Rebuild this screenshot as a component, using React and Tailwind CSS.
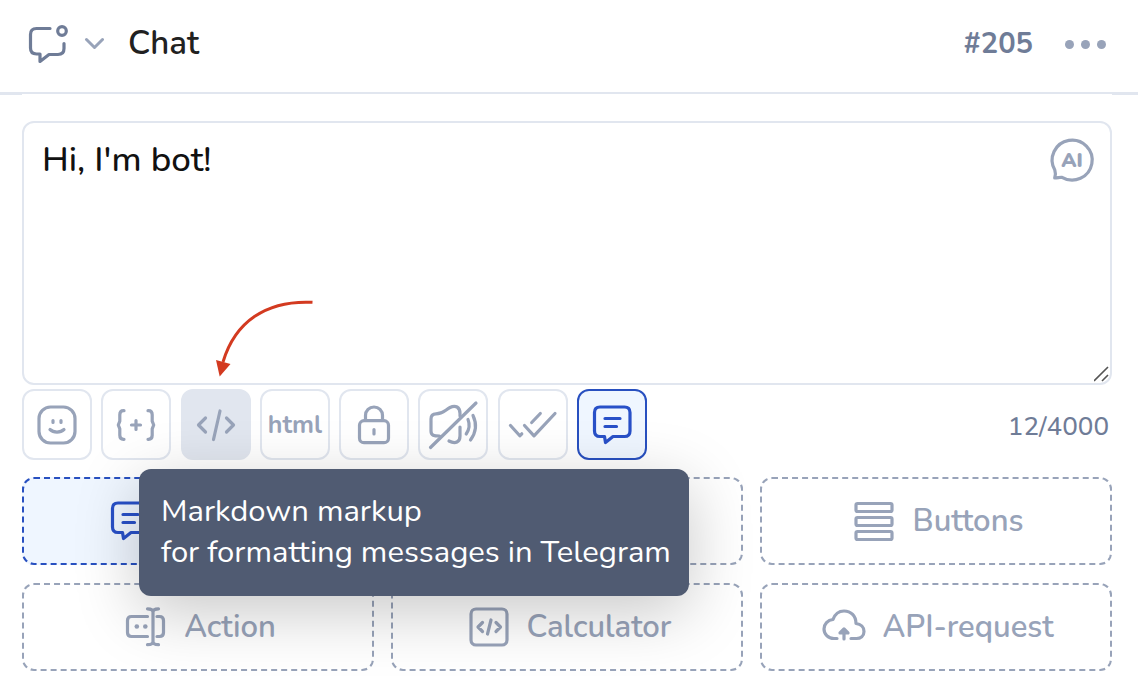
import React, { useState } from 'react';
import clsx from 'clsx';

function Icon({ children }) {
  return (
    <svg
      viewBox="0 0 48 48"
      className="w-12 h-12 shrink-0 overflow-visible"
      fill="none"
      stroke="currentColor"
      strokeWidth="3.2"
      strokeLinecap="round"
      strokeLinejoin="round"
      aria-hidden="true"
    >
      {children}
    </svg>
  );
}

const ChatIcon = () => (
  <Icon>
    <path d="M26 8.500H12.500c-4 0-6 2-6 6v13.500c0 4 2 6 6 6h3.500v7.500L25 34.500h9c4 0 6-2 6-6v-5" />
    <circle cx="38" cy="11" r="4.300" />
  </Icon>
);

const MessageIcon = () => (
  <Icon>
    <path d="M12 6h24.500c3.500 0 5.500 2 5.500 5.500V30c0 3.500-2 5.500-5.500 5.500H25L17.500 41.500 16.500 35.500H12c-3.500 0-5.500-2-5.500-5.500V11.500C6.500 8 8.500 6 12 6z" />
    <path d="M17 17.500h15M17 25.500h11.500" />
  </Icon>
);

const SmileIcon = () => (
  <Icon>
    <rect x="6" y="6" width="36" height="36" rx="11.500" />
    <path d="M20 19.500v2M28 19.500v2M17 28.500c3.500 3.400 10.500 3.400 14 0" />
  </Icon>
);

const VariableIcon = () => (
  <Icon>
    <path d="M12 9.700h-.5c-2.600 0-3.700 1.300-3.700 4v6.500L6.300 24l1.500 3.800v6.500c0 2.700 1.100 4 3.700 4h.5" />
    <path d="M36 9.700h.5c2.600 0 3.700 1.300 3.700 4v6.500l1.500 3.800-1.500 3.800v6.500c0 2.700-1.100 4-3.700 4H36" />
    <path d="M24 19.500v9M19.500 24h9" />
  </Icon>
);

const CodeIcon = () => (
  <Icon>
    <path d="M13.500 17L6.500 24l7 7M34.500 17l7 7-7 7M28 10l-6.500 28.500" />
  </Icon>
);

const LockIcon = () => (
  <Icon>
    <rect x="9.500" y="19.700" width="29" height="22" rx="4.500" />
    <path d="M15.500 19.500v-5a8.500 8.500 0 0 1 17 0v5M24 28.500V33" />
  </Icon>
);

const MuteIcon = () => (
  <Icon>
    <path d="M10.500 35C5 35 2 34.500 2 30V18c0-4 2-5.200 5-5.200 7 0 8.500-3.300 14-6.300 5.500-2.800 10-.5 10 6V15" />
    <path d="M31 26v9c0 6-4.500 8.500-11 5" />
    <path d="M39 18.500c1.800 4.500 1.300 10-1.800 14.500M44 14.500c3.800 8 3 17-2.500 24.500" />
    <path d="M47 2L1.500 46.500" />
  </Icon>
);

const ChecksIcon = () => (
  <Icon>
    <path d="M1.500 24.500l9.300 10.300 2-2M15.500 24.500L25 34.800 46 12.500M22.700 21.500l8.600-9" />
  </Icon>
);

const ActionIcon = () => (
  <Icon>
    <path d="M25.500 13.500H9.500c-2.700 0-4 1.300-4 4v12c0 2.700 1.300 4 4 4h16M35 13.500h2.500c2.700 0 4 1.300 4 4v12c0 2.700-1.300 4-4 4H35" />
    <path d="M25.500 5.800c3.500 0 5.500.700 5.500 3.200 0-2.500 2-3.200 5.500-3.200M31 9v29.500M25.500 41.700c3.500 0 5.500-.7 5.500-3.200 0 2.500 2 3.200 5.500 3.200" />
    <circle cx="14.800" cy="23.500" r="2.300" fill="currentColor" stroke="none" />
    <circle cx="23.300" cy="23.500" r="2.300" fill="currentColor" stroke="none" />
  </Icon>
);

const CalculatorIcon = () => (
  <Icon>
    <rect x="6" y="6" width="36" height="36" rx="5" />
    <path d="M17.500 19.500L13 24l4.500 4.500M31 19.500l4.500 4.500-4.500 4.500M26 17l-3.500 14" />
  </Icon>
);

const ButtonsIcon = () => (
  <Icon>
    <rect x="6" y="6.500" width="36" height="8" rx="1.500" />
    <rect x="6" y="20.500" width="36" height="8" rx="1.500" />
    <rect x="6" y="34.500" width="36" height="8" rx="1.500" />
  </Icon>
);

const CloudIcon = () => (
  <Icon>
    <path d="M17 35.500h-3C8 35.500 4 31 4 26c0-4.800 3.700-9 9-9.500C15 11 19 8 24 8c7 0 12 5 12 12.500 5 .500 8 4 8 8 0 4.500-3.500 7-7.500 7H31" />
    <path d="M24 36V26M20 30l4-4 4 4z" fill="currentColor" />
  </Icon>
);

const tools = [
  { id: 'emoji', label: 'Emoji', icon: SmileIcon },
  { id: 'variable', label: 'Insert variable', icon: VariableIcon },
  { id: 'markdown', label: 'Markdown', icon: CodeIcon, hovered: true },
  { id: 'html', label: 'html' },
  { id: 'lock', label: 'Protect content', icon: LockIcon },
  { id: 'mute', label: 'Silent message', icon: MuteIcon },
  { id: 'read', label: 'Mark as read', icon: ChecksIcon },
  { id: 'message', label: 'Message', icon: MessageIcon, active: true },
];

// covered blocks sit under the open tooltip and keep only their accessible name
const blocks = [
  { id: 'message', label: 'Message', icon: MessageIcon, active: true, covered: true },
  { id: 'media', label: 'Media', covered: true },
  { id: 'buttons', label: 'Buttons', icon: ButtonsIcon },
  { id: 'action', label: 'Action', icon: ActionIcon },
  { id: 'calculator', label: 'Calculator', icon: CalculatorIcon },
  { id: 'api', label: 'API-request', icon: CloudIcon },
];

function ToolButton({ tool }) {
  const ToolIcon = tool.icon;
  return (
    <button
      type="button"
      aria-label={tool.label}
      className={clsx(
        'w-[70px] h-[71px] flex items-center justify-center rounded-xl border-2',
        tool.active && 'border-[#2850c0] bg-[#eff6ff] text-[#2850c8]',
        tool.hovered && 'border-[#e1e6ef] bg-[#e1e6ef] text-[#98a3b9]',
        !tool.active && !tool.hovered && 'border-[#e1e6ef] bg-white text-[#98a3b9]'
      )}
    >
      {ToolIcon ? <ToolIcon /> : <span className="text-[25px] leading-8 font-bold">{tool.label}</span>}
    </button>
  );
}

function BlockButton({ block }) {
  const BlockIcon = block.icon;
  return (
    <button
      type="button"
      aria-label={block.label}
      className={clsx(
        'h-[88px] flex items-center justify-center gap-3.5 pl-0.5 rounded-xl border-2 border-dashed text-[31px] leading-10 font-semibold',
        block.active
          ? 'border-[#2850c0] bg-[#eff6ff] text-[#2850c8]'
          : 'border-[#98a3b9] bg-white text-[#98a3b9]'
      )}
    >
      {BlockIcon && <BlockIcon />}
      {block.covered ? <span className="w-[124px]" /> : block.label}
    </button>
  );
}

export default function App() {
  const [message, setMessage] = useState("Hi, I'm bot!");

  return (
    <div className="bg-white font-[Nunito,Lato,sans-serif] overflow-hidden pb-[17px]">
      <header className="h-[94px] flex items-center justify-between pl-6 pr-8 pb-1 border-b-2 border-[#e1e6ef]">
        <div className="flex items-center">
          <button type="button" aria-label="Block type" className="flex items-center gap-3 text-[#6f7c97]">
            <ChatIcon />
            <svg viewBox="0 0 20 20" className="w-5 h-5 text-[#98a3b9]" fill="none" stroke="currentColor" strokeWidth="3" strokeLinecap="round" strokeLinejoin="round" aria-hidden="true">
              <path d="M2.500 5.500l8 8 8-8" />
            </svg>
          </button>
          <h1 className="ml-6 text-[33px] leading-10 font-semibold text-[#212121]">Chat</h1>
        </div>
        <div className="flex items-center gap-8">
          <span className="text-[29px] leading-10 font-bold text-[#6f7c97]">#205</span>
          <button type="button" aria-label="More" className="w-[41px] flex justify-between text-[#98a3b9]">
            <span className="w-[9px] h-[9px] rounded-full bg-current" />
            <span className="w-[9px] h-[9px] rounded-full bg-current" />
            <span className="w-[9px] h-[9px] rounded-full bg-current" />
          </button>
        </div>
      </header>
      <div className="flex justify-between h-px">
        <span className="w-[22px] bg-[#e1e6ef]" />
        <span className="w-[26px] bg-[#e1e6ef]" />
      </div>

      <main className="pl-[22px] pr-[26px] pt-[26px]">
        <div className="relative">
          <textarea
            aria-label="Message text"
            value={message}
            onChange={(e) => setMessage(e.target.value)}
            className="block w-full h-[264px] resize-none rounded-xl border-2 border-[#e1e6ef] pl-[18px] pr-20 py-4 text-[35px] leading-[42px] font-medium text-[#111] outline-none"
          />
          <button type="button" aria-label="AI assistant" className="absolute right-4 top-[15px] text-[#98a3b9]">
            <Icon>
              <path d="M6.800 34A20 20 0 1 1 14 41.300c-2-.3-4.500.700-7.300.700.9-2.500 1.100-5 .1-8z" />
              <text x="24" y="31" textAnchor="middle" fontSize="20" fontWeight="900" fill="currentColor" stroke="none">AI</text>
            </Icon>
          </button>
          <svg viewBox="0 0 16 16" className="absolute right-0.5 bottom-[3px] w-4 h-4 pointer-events-none" stroke="#555" strokeWidth="1.600" aria-hidden="true">
            <path d="M0 15L14 1M8 15l6-6" />
          </svg>
          <svg viewBox="0 0 100 80" className="absolute left-[193px] top-[178px] w-[100px] h-20 pointer-events-none" fill="none" aria-hidden="true">
            <path d="M97.500 3.300C51 1 20 23 8 63" stroke="#d33a20" strokeWidth="3" />
            <path d="M1 61l14.500 4L4.700 77.500z" fill="#d33a20" />
          </svg>
        </div>

        <div className="relative flex items-center justify-between mt-1 mb-[17px]">
          <div className="w-[625px] flex justify-between">
            {tools.map((tool) => (
              <ToolButton key={tool.id} tool={tool} />
            ))}
          </div>
          <span className="pr-[3px] pt-1 text-[26px] leading-8 font-medium text-[#6f7c97]">12/4000</span>

          <div
            role="tooltip"
            className="absolute z-10 left-[117px] top-20 pl-[22px] pr-[18px] pt-[22px] pb-[23px] rounded-xl bg-[#505b72] text-white text-[31px] leading-[41px] whitespace-nowrap shadow-[0_16px_64px_rgba(0,0,0,0.22)]"
          >
            Markdown markup
            <br />
            for formatting messages in Telegram
          </div>
        </div>

        <div className="grid grid-cols-3 gap-x-[17px] gap-y-[18px]">
          {blocks.map((block) => (
            <BlockButton key={block.id} block={block} />
          ))}
        </div>
      </main>
    </div>
  );
}
